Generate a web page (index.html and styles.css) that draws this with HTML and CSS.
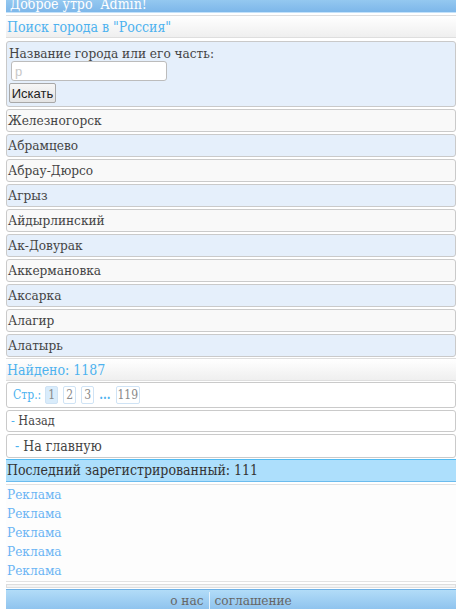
FILE: index.html
```html
<!DOCTYPE html>
<html lang="ru">
<head>
<meta charset="utf-8">
<title>Поиск города</title>
<link rel="stylesheet" href="styles.css">
</head>
<body>
<div class="page">
  <div class="top">Доброе утро&nbsp; Admin!</div>

  <div class="title-bar">Поиск города в "Россия"</div>

  <form class="search">
    <div class="search-label">Название города или его часть:</div>
    <input class="search-input" type="text" placeholder="р">
    <button class="search-btn" type="button">Искать</button>
  </form>

  <ul class="cities">
    <li class="city">Железногорск</li>
    <li class="city alt">Абрамцево</li>
    <li class="city">Абрау-Дюрсо</li>
    <li class="city alt">Агрыз</li>
    <li class="city">Айдырлинский</li>
    <li class="city alt">Ак-Довурак</li>
    <li class="city">Аккермановка</li>
    <li class="city alt">Аксарка</li>
    <li class="city">Алагир</li>
    <li class="city alt">Алатырь</li>
  </ul>

  <div class="title-bar found">Найдено: 1187</div>

  <div class="pager">
    <span class="pager-label">Стр.:</span>
    <span class="pg current">1</span>
    <span class="pg">2</span>
    <span class="pg">3</span>
    <span class="dots">...</span>
    <span class="pg">119</span>
  </div>

  <div class="nav-row"><span class="dash">-</span> Назад</div>
  <div class="nav-row big"><span class="dash">-</span> На главную</div>

  <div class="last-user">Последний зарегистрированный: 111</div>

  <div class="ads">
    <a class="ad">Реклама</a>
    <a class="ad">Реклама</a>
    <a class="ad">Реклама</a>
    <a class="ad">Реклама</a>
    <a class="ad">Реклама</a>
  </div>

  <div class="rule"></div>

  <div class="footer">
    <a class="foot-link">о нас</a><span class="foot-sep"></span><a class="foot-link">соглашение</a>
  </div>
</div>
</body>
</html>
```
FILE: styles.css
```css
html, body {
  margin: 0;
  padding: 0;
  background: #ffffff;
}

body {
  font-family: "DejaVu Serif", serif;
  font-stretch: condensed;
  color: #444;
  overflow: hidden;
}

.page {
  margin-left: 6px;
  width: 450px;
}

/* greeting strip */
.top {
  height: 12px;
  overflow: hidden;
  background: linear-gradient(#94c8f0, #7db7ea);
  border-bottom: 1px solid #c4e2fa;
  color: #fff;
  font-size: 14px;
  line-height: 8px;
  padding-left: 4px;
  margin-bottom: 2px;
}

/* grey gradient section headers */
.title-bar {
  height: 21px;
  border-top: 1px solid #dedede;
  border-bottom: 1px solid #dedede;
  background: linear-gradient(#ffffff, #efefef);
  color: #4db2ef;
  font-size: 14px;
  line-height: 22px;
  padding-left: 1px;
}

/* search form */
.search {
  margin: 3px 0 2px;
  border: 1px solid #c9c9c9;
  border-radius: 3px;
  background: #e5effb;
  padding: 3px 1px 3px 2px;
  display: flex;
  flex-direction: column;
  align-items: flex-start;
}

.search-label {
  font-size: 13.5px;
  line-height: 16px;
  color: #444;
}

.search-input {
  box-sizing: border-box;
  width: 156px;
  height: 20px;
  margin: 0 0 2px 2px;
  border: 1px solid #bcbcbc;
  border-radius: 3px;
  background: #fff;
  padding: 0 3px;
  font-family: "Liberation Sans", Arial, sans-serif;
  font-size: 13px;
}

.search-input::placeholder {
  color: #c8c8c8;
}

.search-btn {
  box-sizing: border-box;
  height: 20px;
  width: 47px;
  padding: 0;
  border: 1px solid #a8a8a8;
  border-radius: 2px;
  background: linear-gradient(#f6f6f6, #e4e4e4);
  color: #222;
  font-family: "Liberation Sans", Arial, sans-serif;
  font-stretch: normal;
  font-size: 13px;
}

/* city list */
.cities {
  list-style: none;
  margin: 0;
  padding: 0;
  display: flex;
  flex-direction: column;
  gap: 2px;
}

.city {
  height: 21px;
  border: 1px solid #cacaca;
  border-radius: 3px;
  background: #f9f9f9;
  padding-left: 1px;
  font-size: 13.5px;
  line-height: 20px;
  color: #444;
}

.city.alt {
  background: #e5effb;
}

.found {
  margin-top: 1px;
}

/* pagination */
.pager {
  margin-top: 1px;
  height: 24px;
  border: 1px solid #cacaca;
  border-radius: 3px;
  background: #fff;
  display: flex;
  align-items: center;
  gap: 5px;
  padding-left: 6px;
  font-size: 12px;
}

.pager-label {
  color: #4db2ef;
  margin-right: -1px;
}

.pg {
  box-sizing: border-box;
  min-width: 13px;
  height: 18px;
  padding: 0 1px;
  border: 1px solid #cfe3f5;
  border-radius: 2px;
  color: #8a8a8a;
  line-height: 16px;
  text-align: center;
}

.pg.current {
  background: #d9ecfb;
}

.dots {
  color: #4db2ef;
  font-weight: bold;
}

/* back / home rows */
.nav-row {
  margin-top: 2px;
  height: 20px;
  border: 1px solid #cacaca;
  border-radius: 3px;
  background: #fff;
  padding-left: 4px;
  font-size: 12.5px;
  line-height: 20px;
  color: #444;
}

.nav-row.big {
  height: 22px;
  padding-left: 8px;
  font-size: 14px;
  line-height: 23px;
}

.dash {
  color: #4db2ef;
}

/* last registered user */
.last-user {
  margin-top: 1px;
  height: 21px;
  border-top: 1px solid #52bbf2;
  border-bottom: 1px solid #6cbcee;
  background: #addffc;
  padding-left: 1px;
  font-size: 14px;
  line-height: 21px;
  color: #333;
}

/* advertising block */
.ads {
  margin-top: 2px;
  border-top: 1px solid #e2e2e2;
  border-bottom: 1px solid #e2e2e2;
  background: #fdfdfd;
  padding: 0 0 1px 1px;
  display: flex;
  flex-direction: column;
}

.ad {
  font-size: 13.5px;
  line-height: 19px;
  color: #6ab4f4;
}

.rule {
  margin-top: 2px;
  height: 2px;
  border: 1px solid #dedede;
  background: #f4f4f4;
}

/* footer */
.footer {
  margin-top: 1px;
  height: 24px;
  border-top: 1px solid #6fb1e6;
  background: linear-gradient(#b2dcf8, #86bdec);
  display: flex;
  justify-content: center;
  align-items: flex-start;
  font-size: 13.5px;
  line-height: 21px;
}

.foot-link {
  color: #666;
}

.foot-sep {
  width: 1px;
  height: 18px;
  margin: 2px 5px 0 5px;
  background: #e6f3fd;
}
```
